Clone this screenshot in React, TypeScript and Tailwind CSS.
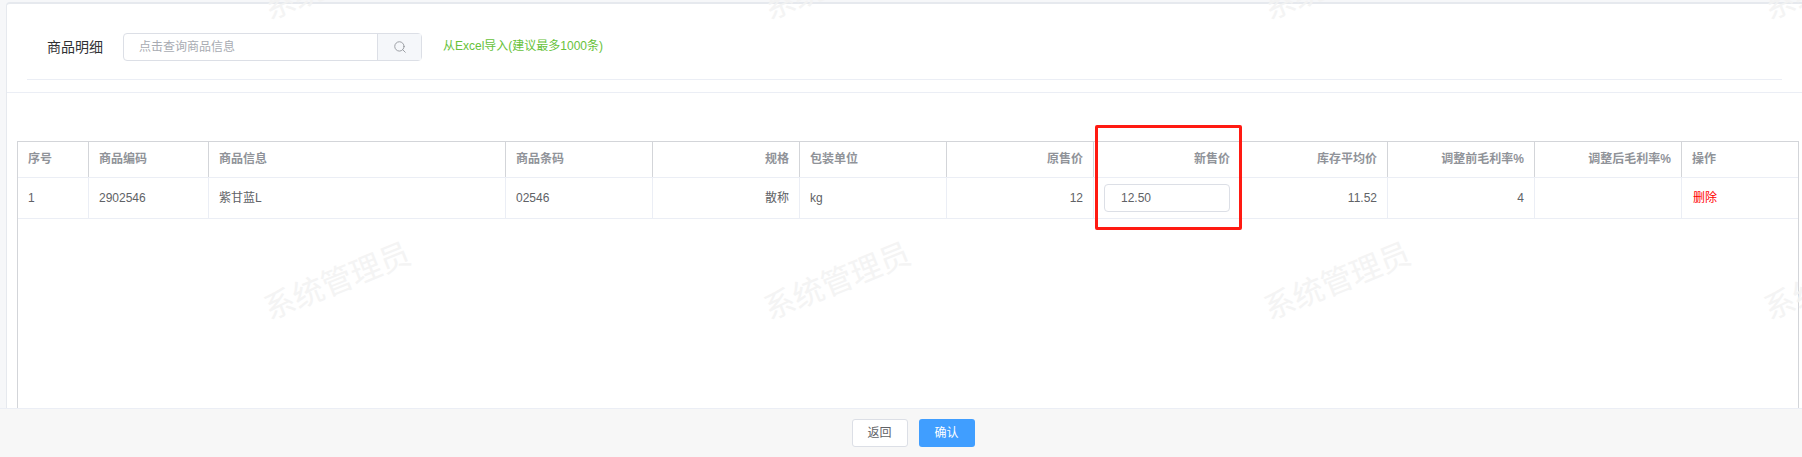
import { Search } from "lucide-react";

const columns = [
  { title: "序号", value: "1", right: false },
  { title: "商品编码", value: "2902546", right: false },
  { title: "商品信息", value: "紫甘蓝L", right: false },
  { title: "商品条码", value: "02546", right: false },
  { title: "规格", value: "散称", right: true },
  { title: "包装单位", value: "kg", right: false },
  { title: "原售价", value: "12", right: true },
  { title: "新售价", value: "", right: true },
  { title: "库存平均价", value: "11.52", right: true },
  { title: "调整前毛利率%", value: "4", right: true },
  { title: "调整后毛利率%", value: "", right: true },
  { title: "操作", value: "", right: false },
];

const marks = [
  "left-[260px] top-[-38px]",
  "left-[760px] top-[-38px]",
  "left-[1260px] top-[-38px]",
  "left-[1760px] top-[-38px]",
  "left-[260px] top-[262px]",
  "left-[760px] top-[262px]",
  "left-[1260px] top-[262px]",
  "left-[1760px] top-[262px]",
];

const App = () => {
  return (
    <div className="relative flex h-[457px] w-[1802px] flex-col overflow-hidden bg-[#f6f7f9] font-['Liberation_Sans','Noto_Sans_CJK_SC',sans-serif] text-xs text-[#606266]">
      <div className="ml-[6px] mt-[2px] flex min-h-0 flex-1 flex-col rounded-tl-[4px] border-t-2 border-l border-[#e6e9ee] bg-white">
        <div className="mx-[20px] flex h-[76px] shrink-0 items-start border-b border-[#ebeef5] pt-[29px]">
          <span className="ml-[20px] w-[76px] text-sm leading-[28px] text-[#303133]">
            商品明细
          </span>
          <div className="flex h-[28px] w-[299px] rounded-[4px] border border-[#dcdfe6]">
            <span className="flex-1 pl-[15px] leading-[26px] text-[#a8abb2]">
              点击查询商品信息
            </span>
            <span className="flex w-[44px] items-center justify-center border-l border-[#dcdfe6] bg-[#f5f7fa] text-[#909399]">
              <Search size={14} strokeWidth={1.5} />
            </span>
          </div>
          <span className="ml-[21px] leading-[26px] text-[#67c23a]">
            从Excel导入(建议最多1000条)
          </span>
        </div>
        <div className="mt-[12px] shrink-0 border-b border-[#ebeef5]" />
        <div className="ml-[10px] mr-[3px] mt-[48px] min-h-0 flex-1 border-x border-t border-[#d3d5d9]">
          <div className="grid h-[36px] grid-cols-[71px_120px_297px_147px_147px_147px_147px_147px_147px_147px_147px_1fr] border-b border-[#ebeef5]">
            {columns.map((col) => (
              <div
                key={col.title}
                className={`border-r border-[#d3d5d9] px-[10px] font-bold leading-[35px] text-[#909399] last:border-r-0 ${
                  col.right ? "text-right" : ""
                }`}
              >
                {col.title}
              </div>
            ))}
          </div>
          <div className="grid h-[41px] grid-cols-[71px_120px_297px_147px_147px_147px_147px_147px_147px_147px_147px_1fr] border-b border-[#ebeef5]">
            {columns.map((col) => (
              <div
                key={col.title}
                className={`flex items-center border-r border-[#ebeef5] px-[10px] last:border-r-0 ${
                  col.right ? "justify-end" : ""
                }`}
              >
                {col.title === "新售价" && (
                  <div className="h-[28px] w-[126px] rounded-[4px] border border-[#dcdfe6] pl-[16px] leading-[26px]">
                    12.50
                  </div>
                )}
                {col.title === "操作" && (
                  <span className="pl-[1px] text-[#ff0000]">删除</span>
                )}
                {col.value}
              </div>
            ))}
          </div>
        </div>
      </div>

      <div className="z-10 flex h-[49px] shrink-0 justify-center gap-[11px] border-t border-[#ebeef5] bg-[#f7f7f7] pl-[24px] pt-[10px]">
        <button className="h-[28px] w-[56px] rounded-[3px] border border-[#dcdfe6] bg-white text-[#606266]">
          返回
        </button>
        <button className="h-[28px] w-[56px] rounded-[3px] bg-[#409eff] text-white">
          确认
        </button>
      </div>

      {/* red highlight drawn on top of the screenshot */}
      <div className="absolute left-[1095px] top-[125px] h-[105px] w-[147px] rounded-[2px] border-[3px] border-[#ff1a12]" />

      {marks.map((pos) => (
        <span
          key={pos}
          className={`pointer-events-none absolute z-0 -rotate-[22deg] whitespace-nowrap text-[31px] leading-[40px] text-[#f3f3f3] opacity-90 ${pos}`}
        >
          系统管理员
        </span>
      ))}
    </div>
  );
};

export default App;
